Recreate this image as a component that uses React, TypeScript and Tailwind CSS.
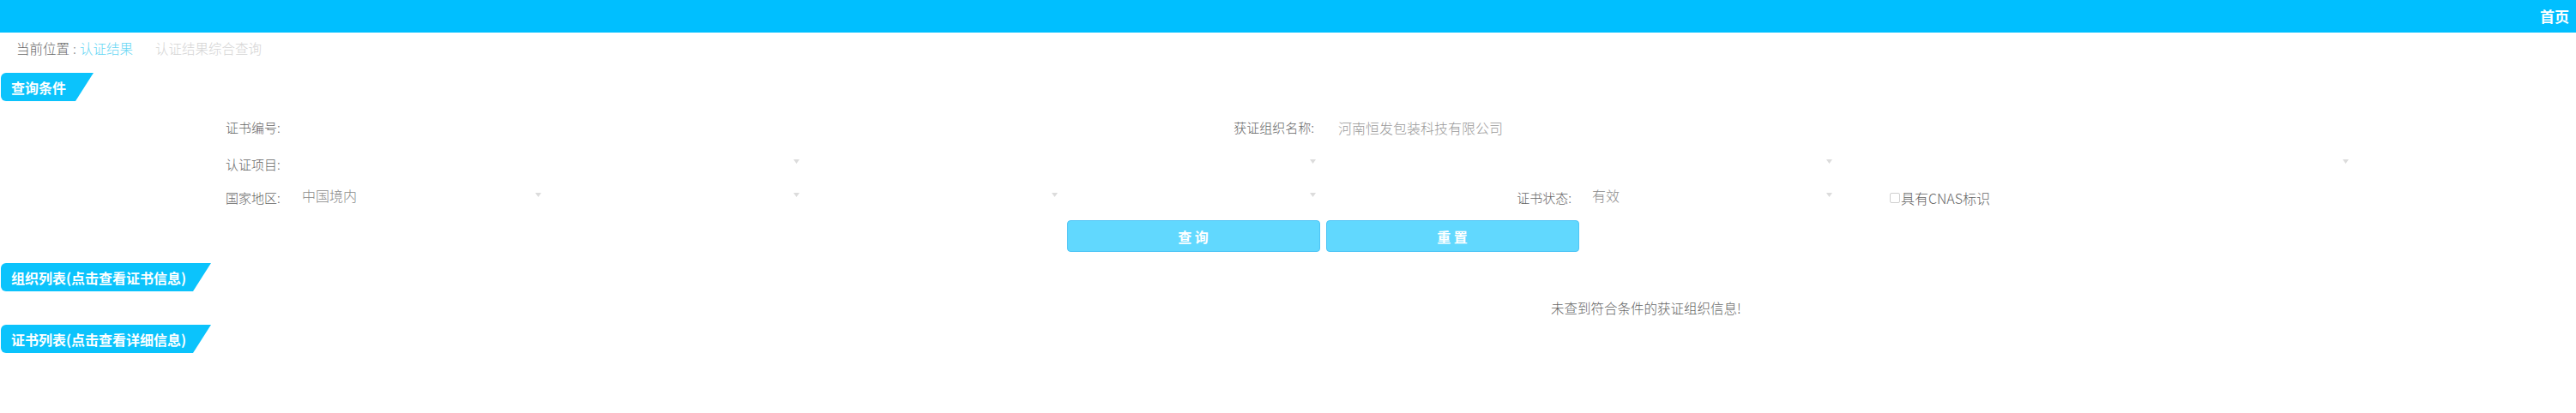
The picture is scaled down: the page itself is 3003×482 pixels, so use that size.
import React from "react";

const Tri = () => (
  <svg width="7" height="5" viewBox="0 0 7 5" className="shrink-0">
    <polygon points="0,0 7,0 3.5,5" fill="#dcdcdc" />
  </svg>
);

const Select = ({ w, value, pl }: { w: string; value?: string; pl: string }) => (
  <div className={`${w} ${pl} flex h-full items-center justify-between pr-[6px]`}>
    <span className="-mt-[6px] text-[16px] text-[#8a8a8a]">{value ?? ""}</span>
    <span className="-mt-[8px]">
      <Tri />
    </span>
  </div>
);

const Tab = ({ label, w }: { label: string; w: string }) => (
  <div
    className={`${w} ml-[1px] flex h-[33px] items-center rounded-l-[6px] bg-[#0bc3fc] pl-[12px] text-[16px] font-bold text-white [clip-path:polygon(0_0,100%_0,calc(100%-21px)_100%,0_100%)]`}
  >
    {label}
  </div>
);

export default function App() {
  return (
    <div className="min-h-screen w-[3003px] bg-white [font-family:'Noto_Sans_CJK_SC','Noto_Sans',sans-serif] font-light">
      {/* top bar */}
      <div className="flex h-[38px] items-center justify-end bg-[#00bfff] pr-[8px]">
        <span className="text-[17px] font-bold text-white">首页</span>
      </div>

      {/* breadcrumb */}
      <div className="flex h-[38px] items-center pl-[19px] text-[15.5px]">
        <span className="text-[#666]">当前位置</span>
        <span className="ml-[4px] text-[#888]">:</span>
        <span className="ml-[4px] text-[#66d6f4]">认证结果</span>
        <span className="ml-[26px] text-[#d4d4d4]">认证结果综合查询</span>
      </div>

      <div className="mt-[9px]">
        <Tab label="查询条件" w="w-[108px]" />
      </div>

      {/* form */}
      <div className="w-[2744px] pl-[263px] text-[15px] text-[#666]">
        {/* row 1 */}
        <div className="mt-[12px] flex h-[38px] items-center gap-[4px]">
          <div className="-mr-[4px] w-[77px]">证书编号:</div>
          <div className="h-full w-[598px]" />
          <div className="w-[598px] pr-[8px] text-right">获证组织名称:</div>
          <div className="w-[1200px] pl-[16px] text-[16px] text-[#9a9a9a]">河南恒发包装科技有限公司</div>
        </div>

        {/* row 2 */}
        <div className="mt-[5px] flex h-[38px] items-center gap-[4px]">
          <div className="-mr-[4px] w-[77px]">认证项目:</div>
          <Select w="w-[598px]" pl="pl-[12px]" />
          <Select w="w-[598px]" pl="pl-[12px]" />
          <Select w="w-[598px]" pl="pl-[12px]" />
          <Select w="w-[598px]" pl="pl-[12px]" />
        </div>

        {/* row 3 */}
        <div className="mt-[1px] flex h-[38px] items-center gap-[4px]">
          <div className="-mr-[4px] w-[77px]">国家地区:</div>
          <Select w="w-[297px]" pl="pl-[12px]" value="中国境内" />
          <Select w="w-[297px]" pl="pl-[12px]" />
          <Select w="w-[297px]" pl="pl-[12px]" />
          <Select w="w-[297px]" pl="pl-[12px]" />
          <div className="flex h-full">
            <div className="flex w-[301px] items-center justify-end pr-[13px]">证书状态:</div>
            <Select w="w-[297px]" pl="pl-[11px]" value="有效" />
          </div>
          <div className="ml-[57px] flex items-center">
            <span className="inline-block h-[12px] w-[12px] rounded-[2px] border border-[#d0d0d0] bg-white" />
            <span className="ml-[1px] text-[16px] text-[#666]">具有CNAS标识</span>
          </div>
        </div>

        {/* buttons */}
        <div className="mt-[7px] flex justify-center gap-[7px] pl-[77px]">
          <button className="flex h-[37px] w-[295px] items-center justify-center rounded-[4px] border border-[#4ec5f6] bg-[#61d8fe] text-[16px] font-bold text-white">
            查 询
          </button>
          <button className="flex h-[37px] w-[295px] items-center justify-center rounded-[4px] border border-[#4ec5f6] bg-[#61d8fe] text-[16px] font-bold text-white">
            重 置
          </button>
        </div>
      </div>

      <div className="mt-[13px]">
        <Tab label="组织列表(点击查看证书信息)" w="w-[245px]" />
      </div>

      <div className="flex h-[39px] items-center pl-[1808px] text-[15.5px] text-[#666]">
        未查到符合条件的获证组织信息!
      </div>

      <div>
        <Tab label="证书列表(点击查看详细信息)" w="w-[245px]" />
      </div>
    </div>
  );
}
